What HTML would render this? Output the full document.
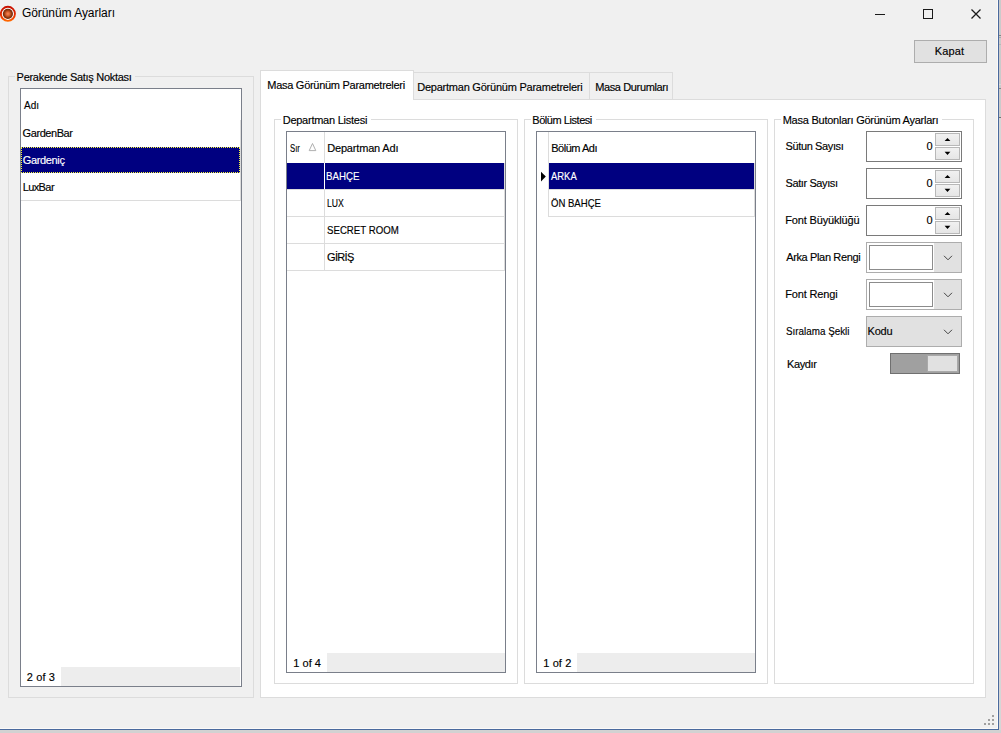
<!DOCTYPE html>
<html lang="tr">
<head>
<meta charset="utf-8">
<title>Görünüm Ayarları</title>
<style>
html,body{margin:0;padding:0;}
body{width:1001px;height:733px;overflow:hidden;background:#f0f0f0;position:relative;
  font-family:"Liberation Sans",sans-serif;font-size:11px;color:#000;}
#win{position:absolute;left:0;top:0;width:1001px;height:733px;overflow:hidden;background:#f0f0f0;}
.abs{position:absolute;}
.t{position:absolute;white-space:nowrap;transform-origin:0 50%;-webkit-text-stroke:0.15px currentColor;font-size:11px;line-height:13px;height:13px;color:#000;}
.box{position:absolute;box-sizing:border-box;}
.grp{position:absolute;box-sizing:border-box;border:1px solid #dcdcdc;}
.grid{position:absolute;box-sizing:border-box;border:1px solid #7a7f8a;background:#fff;}
.sel{position:absolute;background:#000080;}
.hl{position:absolute;height:1px;background:#dcdcdc;}
.vl{position:absolute;width:1px;background:#dcdcdc;}
.w{color:#fff;}
.btn{position:absolute;box-sizing:border-box;background:#e1e1e1;border:1px solid #adadad;}
.foot{position:absolute;background:#ededed;}
</style>
</head>
<body>
<div id="win">

<!-- ===== title bar ===== -->
<svg class="abs" style="left:0;top:5px" width="17" height="17" viewBox="0 0 17 17">
  <defs>
    <linearGradient id="rg" x1="0" y1="0" x2="0" y2="1">
      <stop offset="0" stop-color="#c81000"/><stop offset="0.5" stop-color="#e02800"/><stop offset="0.85" stop-color="#f84800"/><stop offset="1" stop-color="#ff6a00"/>
    </linearGradient>
    <radialGradient id="cg" cx="0.5" cy="0.5" r="0.5">
      <stop offset="0" stop-color="#f68a58"/><stop offset="0.35" stop-color="#dc6434"/><stop offset="0.7" stop-color="#9a3c12"/><stop offset="1" stop-color="#642406"/>
    </radialGradient>
  </defs>
  <circle cx="7.9" cy="8.8" r="7.05" fill="#fff" stroke="url(#rg)" stroke-width="1.9"/>
  <circle cx="7.9" cy="8.8" r="5.1" fill="url(#cg)"/>
</svg>
<div class="t" id="title" style="-webkit-text-stroke:0;left:21.9px;top:6px;font-size:12px;line-height:15px;height:15px;letter-spacing:-0.05px;">Görünüm Ayarları</div>

<!-- caption buttons -->
<div class="abs" style="left:875px;top:14px;width:10px;height:1px;background:#1a1a1a;"></div>
<div class="box" style="left:923px;top:9px;width:10px;height:10px;border:1px solid #1a1a1a;"></div>
<svg class="abs" style="left:970px;top:8px" width="12" height="12" viewBox="0 0 12 12">
  <path d="M1.5 1.5 L10.5 10.5 M10.5 1.5 L1.5 10.5" stroke="#1a1a1a" stroke-width="1.25" fill="none"/>
</svg>

<!-- Kapat button -->
<div class="btn" style="left:914px;top:40px;width:73px;height:23px;"></div>
<div class="t" id="kapat" style="left:934.8px;top:45px;letter-spacing:0.12px;">Kapat</div>

<!-- ===== left group ===== -->
<div class="grp" style="left:8px;top:76px;width:246px;height:622px;"></div>
<div class="abs" style="left:15px;top:76px;width:120px;height:1px;background:#f0f0f0;"></div>
<div class="t" id="g0" style="left:16.6px;top:71px;letter-spacing:-0.29px;">Perakende Satış Noktası</div>
<div class="grid" style="left:20px;top:88px;width:222px;height:599px;"></div>
<div class="t" id="l_h" style="left:23.9px;top:99px;transform:scaleX(0.906);">Adı</div>
<div class="t" id="l_r1" style="left:22.6px;top:127px;letter-spacing:-0.43px;">GardenBar</div>
<div class="sel" style="left:21px;top:147px;width:219px;height:26px;box-sizing:border-box;border:1px dotted #f4f43c;"></div>
<div class="t w" id="l_r2" style="left:22.7px;top:154px;letter-spacing:-0.34px;">Gardeniç</div>
<div class="t" id="l_r3" style="left:22.7px;top:181px;letter-spacing:-0.6px;">LuxBar</div>
<div class="hl" style="left:21px;top:200px;width:220px;"></div>
<div class="vl" style="left:240px;top:120px;height:80px;"></div>
<div class="foot" style="left:61px;top:667px;width:179px;height:19px;"></div>
<div class="t" id="l_f" style="left:26.7px;top:671px;letter-spacing:0.15px;">2 of 3</div>

<!-- ===== tabs ===== -->
<div class="box" style="left:260px;top:99px;width:726px;height:599px;background:#fff;border:1px solid #dcdcdc;"></div>
<div class="box" style="left:413px;top:72px;width:177px;height:27px;border:1px solid #dcdcdc;border-bottom:none;border-left:none;"></div>
<div class="box" style="left:589px;top:72px;width:84px;height:27px;border:1px solid #dcdcdc;border-bottom:none;"></div>
<div class="box" style="left:260px;top:70px;width:154px;height:30px;background:#fff;border:1px solid #dcdcdc;border-bottom:none;"></div>
<div class="t" id="tab1" style="left:267.3px;top:79px;letter-spacing:-0.28px;">Masa Görünüm Parametreleri</div>
<div class="t" id="tab2" style="left:417.2px;top:81px;letter-spacing:-0.23px;">Departman Görünüm Parametreleri</div>
<div class="t" id="tab3" style="left:595.2px;top:81px;letter-spacing:-0.37px;">Masa Durumları</div>

<!-- ===== Departman Listesi ===== -->
<div class="grp" style="left:274px;top:119px;width:244px;height:565px;"></div>
<div class="abs" style="left:281px;top:119px;width:90px;height:1px;background:#fff;"></div>
<div class="t" id="g1" style="left:282.7px;top:114px;letter-spacing:-0.25px;">Departman Listesi</div>
<div class="grid" style="left:286px;top:131px;width:220px;height:542px;"></div>
<div class="t" id="d_h1" style="left:289.6px;top:142px;transform:scaleX(0.706);">Sır</div>
<svg class="abs" style="left:308px;top:143px" width="9" height="9" viewBox="0 0 9 9"><path d="M4.5 0.5 L7.8 7.6 L1.2 7.6 Z" fill="none" stroke="#a6a6a6" stroke-width="0.9"/></svg>
<div class="t" id="d_h2" style="left:327.2px;top:142px;letter-spacing:-0.17px;">Departman Adı</div>
<div class="vl" style="left:324px;top:132px;height:139px;"></div>
<div class="sel" style="left:287px;top:163px;width:217px;height:26px;"></div>
<div class="vl" style="left:324px;top:163px;height:26px;background:#fff;"></div>
<div class="t w" id="d_r1" style="left:325.9px;top:170px;transform:scaleX(0.881);">BAHÇE</div>
<div class="hl" style="left:287px;top:189px;width:218px;"></div>
<div class="t" id="d_r2" style="left:327.2px;top:197px;transform:scaleX(0.785);">LUX</div>
<div class="hl" style="left:287px;top:216px;width:218px;"></div>
<div class="t" id="d_r3" style="left:327.1px;top:224px;transform:scaleX(0.878);">SECRET ROOM</div>
<div class="hl" style="left:287px;top:243px;width:218px;"></div>
<div class="t" id="d_r4" style="left:327.0px;top:251px;letter-spacing:-0.67px;">GİRİŞ</div>
<div class="hl" style="left:287px;top:270px;width:218px;"></div>
<div class="vl" style="left:504px;top:163px;height:108px;"></div>
<div class="foot" style="left:327px;top:653px;width:178px;height:19px;"></div>
<div class="t" id="d_f" style="left:293.3px;top:657px;letter-spacing:0.02px;">1 of 4</div>

<!-- ===== Bölüm Listesi ===== -->
<div class="grp" style="left:524px;top:119px;width:244px;height:565px;"></div>
<div class="abs" style="left:531px;top:119px;width:65px;height:1px;background:#fff;"></div>
<div class="t" id="g2" style="left:532.3px;top:114px;letter-spacing:-0.45px;">Bölüm Listesi</div>
<div class="grid" style="left:536px;top:131px;width:220px;height:542px;"></div>
<div class="vl" style="left:548px;top:132px;height:85px;"></div>
<div class="t" id="b_h" style="left:551.2px;top:142px;letter-spacing:-0.48px;">Bölüm Adı</div>
<svg class="abs" style="left:540px;top:171px" width="7" height="11" viewBox="0 0 7 11"><path d="M1 0.8 L5.8 5.6 L1 10.4 Z" fill="#000"/></svg>
<div class="sel" style="left:549px;top:163px;width:205px;height:26px;"></div>
<div class="t w" id="b_r1" style="left:551.2px;top:170px;transform:scaleX(0.858);">ARKA</div>
<div class="hl" style="left:549px;top:189px;width:206px;"></div>
<div class="t" id="b_r2" style="left:550.7px;top:197px;transform:scaleX(0.869);">ÖN BAHÇE</div>
<div class="hl" style="left:549px;top:216px;width:206px;"></div>
<div class="vl" style="left:754px;top:163px;height:54px;"></div>
<div class="foot" style="left:577px;top:653px;width:178px;height:19px;"></div>
<div class="t" id="b_f" style="left:543.3px;top:657px;letter-spacing:0.09px;">1 of 2</div>

<!-- ===== Masa Butonları Görünüm Ayarları ===== -->
<div class="grp" style="left:774px;top:119px;width:200px;height:565px;"></div>
<div class="abs" style="left:781px;top:119px;width:161px;height:1px;background:#fff;"></div>
<div class="t" id="g3" style="left:782.7px;top:114px;letter-spacing:-0.24px;">Masa Butonları Görünüm Ayarları</div>

<div class="t" id="s1" style="left:785.5px;top:140px;letter-spacing:-0.37px;">Sütun Sayısı</div>
<div class="t" id="s2" style="left:785.5px;top:177px;letter-spacing:-0.4px;">Satır Sayısı</div>
<div class="t" id="s3" style="left:785.3px;top:214px;letter-spacing:-0.17px;">Font Büyüklüğü</div>
<div class="t" id="s4" style="left:786.2px;top:251px;letter-spacing:-0.36px;">Arka Plan Rengi</div>
<div class="t" id="s5" style="left:785.3px;top:288px;letter-spacing:-0.17px;">Font Rengi</div>
<div class="t" id="s6" style="left:785.8px;top:325px;transform:scaleX(0.895);">Sıralama Şekli</div>
<div class="t" id="s7" style="left:787.0px;top:358px;letter-spacing:-0.38px;">Kaydır</div>

<!-- controls -->
<div class="box" style="left:866px;top:131px;width:96px;height:31px;background:#fff;border:1px solid #7a7a7a;"></div>
<div class="t" id="n0" style="left:926.6px;top:140px;">0</div>
<div class="btn" style="left:935px;top:133px;width:25px;height:13px;border-color:#b8b8b8;background:linear-gradient(#f1f1f1,#e6e6e6);"></div>
<div class="btn" style="left:935px;top:147px;width:25px;height:13px;border-color:#b8b8b8;background:linear-gradient(#f1f1f1,#e6e6e6);"></div>
<svg class="abs" style="left:944px;top:137px" width="7" height="5" viewBox="0 0 7 5"><path d="M0.6 4.1 L3.5 1 L6.4 4.1 Z" fill="#000"/></svg>
<svg class="abs" style="left:944px;top:151px" width="7" height="5" viewBox="0 0 7 5"><path d="M0.6 0.7 L3.5 4.1 L6.4 0.7 Z" fill="#000"/></svg>
<div class="box" style="left:866px;top:168px;width:96px;height:31px;background:#fff;border:1px solid #7a7a7a;"></div>
<div class="t" id="n1" style="left:926.6px;top:177px;">0</div>
<div class="btn" style="left:935px;top:170px;width:25px;height:13px;border-color:#b8b8b8;background:linear-gradient(#f1f1f1,#e6e6e6);"></div>
<div class="btn" style="left:935px;top:184px;width:25px;height:13px;border-color:#b8b8b8;background:linear-gradient(#f1f1f1,#e6e6e6);"></div>
<svg class="abs" style="left:944px;top:174px" width="7" height="5" viewBox="0 0 7 5"><path d="M0.6 4.1 L3.5 1 L6.4 4.1 Z" fill="#000"/></svg>
<svg class="abs" style="left:944px;top:188px" width="7" height="5" viewBox="0 0 7 5"><path d="M0.6 0.7 L3.5 4.1 L6.4 0.7 Z" fill="#000"/></svg>
<div class="box" style="left:866px;top:205px;width:96px;height:31px;background:#fff;border:1px solid #7a7a7a;"></div>
<div class="t" id="n2" style="left:926.6px;top:214px;">0</div>
<div class="btn" style="left:935px;top:207px;width:25px;height:13px;border-color:#b8b8b8;background:linear-gradient(#f1f1f1,#e6e6e6);"></div>
<div class="btn" style="left:935px;top:221px;width:25px;height:13px;border-color:#b8b8b8;background:linear-gradient(#f1f1f1,#e6e6e6);"></div>
<svg class="abs" style="left:944px;top:211px" width="7" height="5" viewBox="0 0 7 5"><path d="M0.6 4.1 L3.5 1 L6.4 4.1 Z" fill="#000"/></svg>
<svg class="abs" style="left:944px;top:225px" width="7" height="5" viewBox="0 0 7 5"><path d="M0.6 0.7 L3.5 4.1 L6.4 0.7 Z" fill="#000"/></svg>
<div class="btn" style="left:866px;top:242px;width:96px;height:31px;"></div>
<div class="abs" style="left:867px;top:243px;width:67px;height:29px;background:#fff;"></div>
<div class="box" style="left:869px;top:245px;width:64px;height:25px;background:#fff;border:1px solid #8c8c8c;"></div>
<svg class="abs" style="left:943px;top:255px" width="10" height="6" viewBox="0 0 10 6"><path d="M1 0.8 L5 4.8 L9 0.8" fill="none" stroke="#444" stroke-width="1"/></svg>
<div class="btn" style="left:866px;top:279px;width:96px;height:31px;"></div>
<div class="abs" style="left:867px;top:280px;width:67px;height:29px;background:#fff;"></div>
<div class="box" style="left:869px;top:282px;width:64px;height:25px;background:#fff;border:1px solid #8c8c8c;"></div>
<svg class="abs" style="left:943px;top:292px" width="10" height="6" viewBox="0 0 10 6"><path d="M1 0.8 L5 4.8 L9 0.8" fill="none" stroke="#444" stroke-width="1"/></svg>
<div class="btn" style="left:866px;top:316px;width:96px;height:31px;"></div>
<svg class="abs" style="left:943px;top:329px" width="10" height="6" viewBox="0 0 10 6"><path d="M1 0.8 L5 4.8 L9 0.8" fill="none" stroke="#444" stroke-width="1"/></svg>
<div class="t" id="kodu" style="left:867.6px;top:325px;letter-spacing:-0.24px;">Kodu</div>
<div class="box" style="left:890px;top:353px;width:70px;height:21px;background:#a0a0a0;border:1px solid #707070;"></div>
<div class="box" style="left:927px;top:355px;width:31px;height:17px;background:#e1e1e1;border:1px solid #a9a9a9;"></div>
<div class="abs" style="left:992px;top:715px;width:2px;height:2px;background:#a0a0a0;"></div>
<div class="abs" style="left:988px;top:719px;width:2px;height:2px;background:#a0a0a0;"></div>
<div class="abs" style="left:992px;top:719px;width:2px;height:2px;background:#a0a0a0;"></div>
<div class="abs" style="left:984px;top:723px;width:2px;height:2px;background:#a0a0a0;"></div>
<div class="abs" style="left:988px;top:723px;width:2px;height:2px;background:#a0a0a0;"></div>
<div class="abs" style="left:992px;top:723px;width:2px;height:2px;background:#a0a0a0;"></div>
<div class="abs" style="left:0;top:728px;width:998px;height:1px;background:#fcfaf8;"></div>
<div class="abs" style="left:997px;top:0;width:1px;height:729px;background:#fcfaf8;"></div>
<div class="abs" style="left:0;top:729px;width:999px;height:1px;background:#4a6a9e;"></div>
<div class="abs" style="left:998px;top:0;width:1px;height:730px;background:#4a6a9e;"></div>
<div class="abs" style="left:999px;top:0;width:2px;height:733px;background:#cbcbcb;"></div>
<div class="abs" style="left:999px;top:118px;width:2px;height:612px;background:#d6d6d6;"></div>
<div class="abs" style="left:999px;top:35px;width:2px;height:1px;background:#858585;"></div>
<div class="abs" style="left:999px;top:37px;width:2px;height:1px;background:#a8a8a8;"></div>
<div class="abs" style="left:999px;top:44px;width:2px;height:1px;background:#b8b8b8;"></div>
<div class="abs" style="left:999px;top:84px;width:2px;height:1px;background:#dadada;"></div>
<div class="abs" style="left:999px;top:88px;width:2px;height:1px;background:#858585;"></div>
<div class="abs" style="left:999px;top:117px;width:2px;height:1px;background:#707070;"></div>
<div class="abs" style="left:0;top:730px;width:1001px;height:3px;background:#d2d2d2;"></div>

</div>
</body>
</html>
